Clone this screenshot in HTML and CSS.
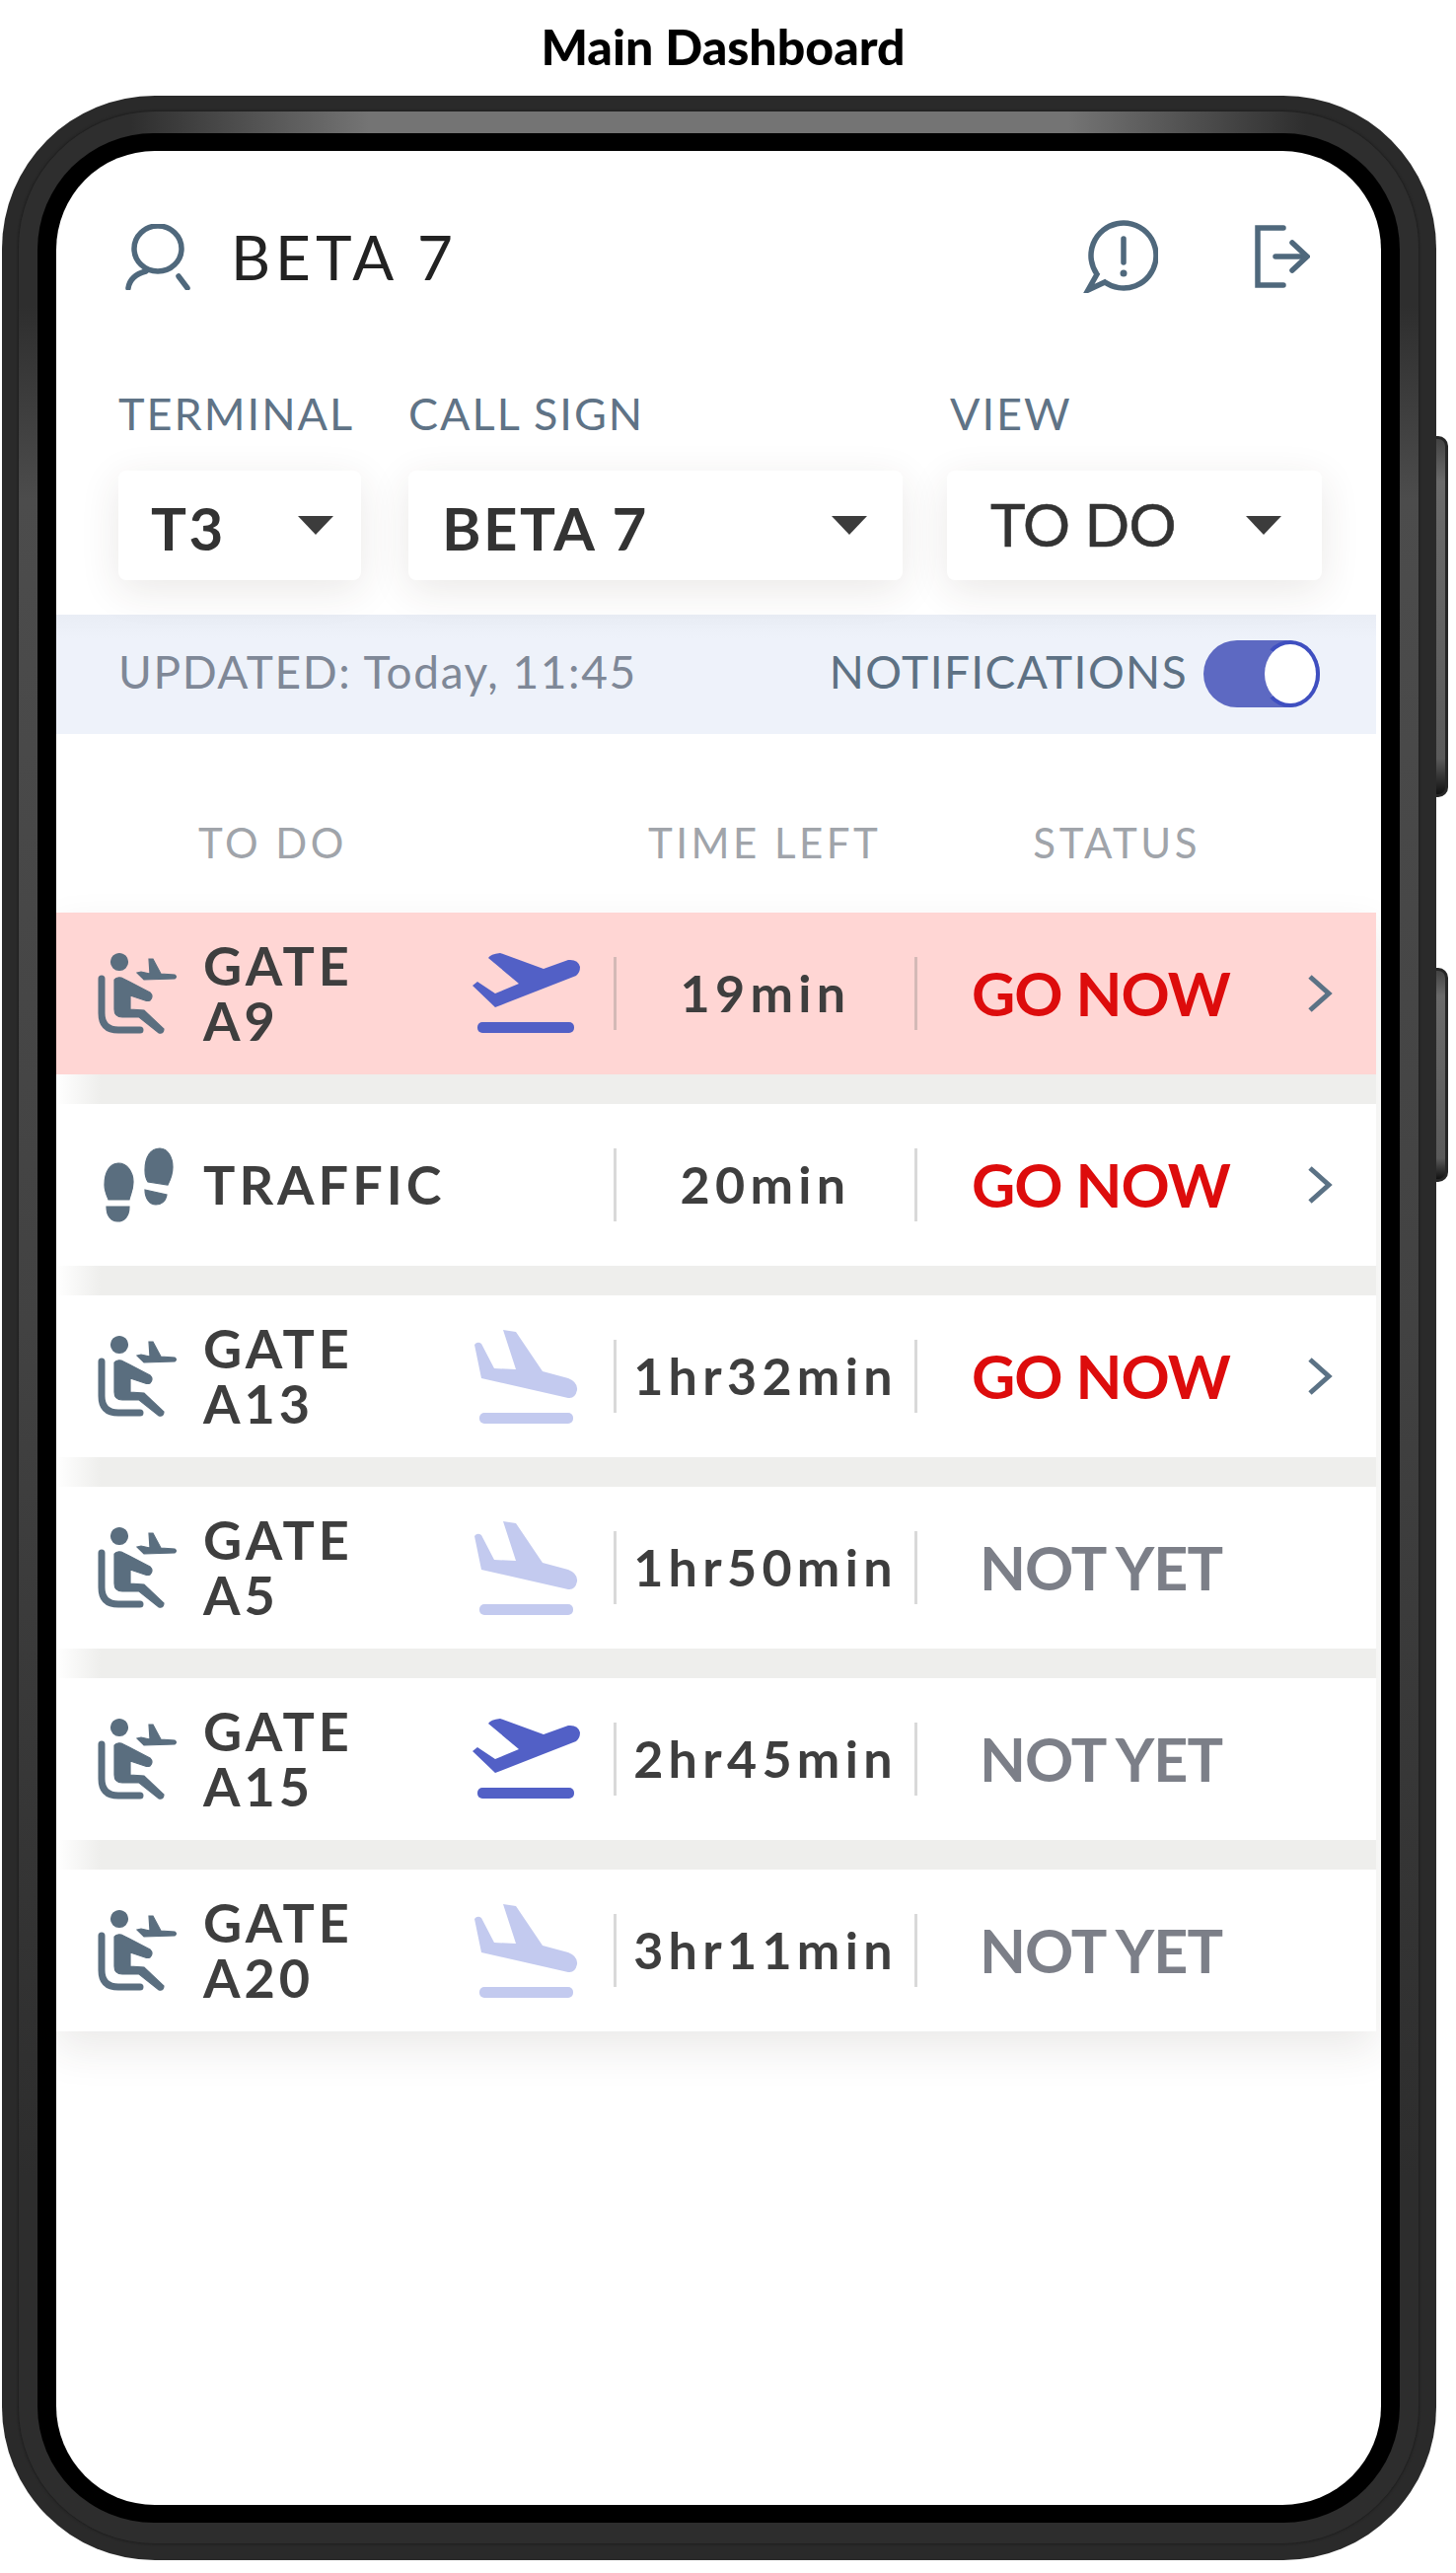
FILE: index.html
```html
<!DOCTYPE html>
<html>
<head>
  <title>Main Dashboard</title>
  <link rel="stylesheet" href="styles.css">
</head>
<body>
  <svg class="defs" width="0" height="0">
    <symbol id="seat" viewBox="0 0 100 100">
      <circle cx="31" cy="18" r="8.5"/>
      <path d="M26 36 Q28 33 33 34 L41 38 L62 49 Q66 53 62 57 Q60 58 57 57 L42 52 L42 66 L56 67 L76 86 Q76 91 71 90 L51 74 L34 74 Q26 74 26 66 Z"/>
      <path class="seat-back" d="M13 35 V70 Q13 87 30 87 H52"/>
      <path d="M49 29 L53 28 L62 30 L61 15 L65 15 L73 30 L87 31 Q90 33 87 35 L56 36 Z"/>
    </symbol>
    <symbol id="steps" viewBox="0 0 100 100">
      <path d="M16 50 C16 36 22 28 30 28 C39 28 45 37 45 47 C45 56 42 60 41 65 L20 65 C18 60 16 56 16 50 Z"/>
      <path d="M18 72 L41 72 C41 82 36 87 29 87 C23 87 18 82 18 72 Z"/>
      <path d="M57 35 C57 21 63 13 72 13 C80 13 85 22 85 32 C85 40 82 46 80 50 L60 47 C58 44 57 40 57 35 Z"/>
      <path d="M57 55 L79 60 C78 67 73 70 68 70 C62 70 57 64 57 55 Z"/>
    </symbol>
    <symbol id="takeoff" viewBox="0 0 110 82">
      <path d="M16 5 Q18 1 28 0 L72 16 L97 7 Q107 6 109 14 Q109 20 105 23 L23 55 L0 33 L5 29 L23 41 L47 31 Z"/>
      <rect x="5" y="70" width="98" height="11" rx="5"/>
    </symbol>
    <symbol id="landing" viewBox="0 0 110 100">
      <path d="M31 3 L44 5 L71 45 L97 52 Q107 56 106 64 Q104 73 97 72 L9 52 L2 18 Q5 14 9 17 L22 42 L44 43 Z"/>
      <rect x="7" y="87" width="95" height="11" rx="5"/>
    </symbol>
    <symbol id="chevron" viewBox="0 0 30 42">
      <path d="M5 4 L24 21 L5 38"/>
    </symbol>
  </svg>

  <h1 class="title">Main Dashboard</h1>

  <div class="phone">
    <div class="side-btn side-btn-top"></div>
    <div class="side-btn side-btn-low"></div>
    <div class="phone-band">
      <div class="phone-bezel">
        <div class="screen">

          <div class="top">
            <svg class="icon-user" viewBox="0 0 66 67">
              <ellipse cx="33" cy="25" rx="24" ry="23"/>
              <path d="M3 65 Q5 52 21 48"/>
              <path d="M54 53 L63 65"/>
            </svg>
            <span class="top-name">BETA 7</span>
            <svg class="icon-alert" viewBox="0 0 76 74">
              <path d="M14 55 A33 33 0 1 1 22 63 L5 71 Z"/>
              <path d="M41 19 V43"/>
              <circle class="dot" cx="41" cy="54" r="3.5"/>
            </svg>
            <svg class="icon-exit" viewBox="0 0 56 64">
              <path d="M29 3 H3 V61 H29"/>
              <path d="M21 32 H52"/>
              <path d="M38 18 L53 32 L38 46"/>
            </svg>
          </div>

          <div class="controls">
            <div class="control">
              <label>TERMINAL</label>
              <div class="select select-t"><span>T3</span><i class="caret"></i></div>
            </div>
            <div class="control">
              <label>CALL SIGN</label>
              <div class="select select-c"><span>BETA 7</span><i class="caret"></i></div>
            </div>
            <div class="control control-view">
              <label>VIEW</label>
              <div class="select select-v"><span>TO DO</span><i class="caret"></i></div>
            </div>
          </div>

          <div class="info">
            <span class="updated">UPDATED: Today, 11:45</span>
            <span class="notif">NOTIFICATIONS</span>
            <div class="toggle"><div class="knob"></div></div>
          </div>

          <div class="heads">
            <span class="head-todo">TO DO</span>
            <span class="head-time">TIME LEFT</span>
            <span class="head-status">STATUS</span>
          </div>

          <div class="rows">
            <div class="row row-alert">
              <svg class="row-icon"><use href="#seat"/></svg>
              <div class="name">GATE<br>A9</div>
              <div class="plane"><svg class="plane-up"><use href="#takeoff"/></svg></div>
              <div class="time">19min</div>
              <div class="status go">GO NOW</div>
              <svg class="chev"><use href="#chevron"/></svg>
            </div>
            <div class="row">
              <svg class="row-icon"><use href="#steps"/></svg>
              <div class="name">TRAFFIC</div>
              <div class="plane"></div>
              <div class="time">20min</div>
              <div class="status go">GO NOW</div>
              <svg class="chev"><use href="#chevron"/></svg>
            </div>
            <div class="row">
              <svg class="row-icon"><use href="#seat"/></svg>
              <div class="name">GATE<br>A13</div>
              <div class="plane"><svg class="plane-down"><use href="#landing"/></svg></div>
              <div class="time">1hr32min</div>
              <div class="status go">GO NOW</div>
              <svg class="chev"><use href="#chevron"/></svg>
            </div>
            <div class="row">
              <svg class="row-icon"><use href="#seat"/></svg>
              <div class="name">GATE<br>A5</div>
              <div class="plane"><svg class="plane-down"><use href="#landing"/></svg></div>
              <div class="time">1hr50min</div>
              <div class="status wait">NOT YET</div>
            </div>
            <div class="row">
              <svg class="row-icon"><use href="#seat"/></svg>
              <div class="name">GATE<br>A15</div>
              <div class="plane"><svg class="plane-up"><use href="#takeoff"/></svg></div>
              <div class="time">2hr45min</div>
              <div class="status wait">NOT YET</div>
            </div>
            <div class="row">
              <svg class="row-icon"><use href="#seat"/></svg>
              <div class="name">GATE<br>A20</div>
              <div class="plane"><svg class="plane-down"><use href="#landing"/></svg></div>
              <div class="time">3hr11min</div>
              <div class="status wait">NOT YET</div>
            </div>
          </div>

        </div>
      </div>
    </div>
  </div>
</body>
</html>
```

FILE: styles.css
```css
body {
  margin: 0;
  background-color: #ffffff;
  font-family: "Lato", "Liberation Sans", sans-serif;
}

.defs {
  position: absolute;
}

.title {
  width: 1466px;
  height: 97px;
  margin: 0;
  display: flex;
  align-items: center;
  justify-content: center;
  padding-bottom: 3px;
  box-sizing: border-box;
  font-size: 50px;
  font-weight: 900;
  color: #000000;
}

/* phone frame */
.phone {
  position: relative;
  width: 1454px;
  height: 2498px;
  margin-left: 2px;
  padding: 16px 18px 17px 17px;
  box-sizing: border-box;
  border-radius: 155px;
  background-color: #2a2a2a;
}

.side-btn {
  position: absolute;
  right: -12px;
  width: 9px;
  border: 3px solid #262626;
  border-left: none;
  border-radius: 0 10px 10px 0;
  background: linear-gradient(#444444, #6a6a6a 12%, #5a5a5a 90%, #111111);
}

.side-btn-top {
  top: 345px;
  height: 360px;
}

.side-btn-low {
  top: 884px;
  height: 211px;
}

.phone-band {
  height: 100%;
  padding: 22px 19px 21px 19px;
  box-sizing: border-box;
  border-radius: 138px;
  background:
    linear-gradient(90deg, #2e2e2e 8%, #747474 25%, #747474 75%, #2e2e2e 92%) top / 100% 22px no-repeat,
    linear-gradient(#2e2e2e, #2e2e2e 8%, #4c4c4c 16%, #424242 50%, #2d2d2d 85%);
  box-shadow: 0 0 3px #111111;
}

.phone-bezel {
  height: 100%;
  padding: 18px 19px;
  box-sizing: border-box;
  border-radius: 118px;
  background-color: #000000;
}

.screen {
  height: 100%;
  padding-top: 70px;
  box-sizing: border-box;
  border-radius: 100px;
  background-color: #ffffff;
  overflow: hidden;
}

/* top bar */
.top {
  display: flex;
  align-items: center;
  height: 74px;
  padding: 0 72px 0 70px;
}

.icon-user,
.icon-alert,
.icon-exit {
  fill: none;
  stroke: #4f687c;
  stroke-width: 5.5;
  stroke-linecap: round;
}

.icon-user {
  width: 66px;
  height: 67px;
}

.top-name {
  margin-left: 41px;
  font-size: 62px;
  letter-spacing: 5px;
  color: #222222;
}

.icon-alert {
  width: 76px;
  height: 74px;
  margin-left: auto;
}

.icon-alert .dot {
  fill: #4f687c;
  stroke: none;
}

.icon-exit {
  width: 56px;
  height: 64px;
  margin-left: 98px;
}

/* dropdowns */
.controls {
  display: flex;
  margin-top: 100px;
  padding-left: 63px;
}

.control label {
  display: block;
  height: 44px;
  margin-bottom: 36px;
  font-size: 45px;
  line-height: 44px;
  letter-spacing: 2px;
  color: #5f7386;
}

.control-view label {
  padding-left: 3px;
}

.select {
  display: flex;
  align-items: center;
  height: 111px;
  box-sizing: border-box;
  border-radius: 8px;
  background-color: #ffffff;
  font-size: 60px;
  color: #333333;
  box-shadow: 0 10px 40px rgba(60, 50, 40, 0.11);
}

.select-t {
  width: 246px;
  padding-left: 33px;
  margin-right: 48px;
}

.select-c {
  width: 501px;
  padding-left: 34px;
  margin-right: 45px;
}

.select-v {
  width: 380px;
  padding-left: 44px;
}

.select-t span,
.select-c span {
  margin-top: 5px;
  font-weight: 700;
  letter-spacing: 2.5px;
}

.select-v span {
  margin-top: -3px;
  letter-spacing: -0.5px;
  -webkit-text-stroke: 0.6px #333333;
}

.caret {
  width: 0;
  height: 0;
  margin-left: auto;
  margin-right: 28px;
  border-left: 18px solid transparent;
  border-right: 18px solid transparent;
  border-top: 19px solid #3c3c3c;
}

.select-c .caret {
  margin-right: 36px;
}

.select-v .caret {
  margin-right: 41px;
}

/* updated bar */
.info {
  display: flex;
  align-items: center;
  width: 1338px;
  height: 121px;
  margin-top: 35px;
  padding: 0 57px 0 63px;
  box-sizing: border-box;
  background: linear-gradient(#e9edf5, #eef2fa 20%);
  font-size: 46px;
}

.updated {
  margin-top: -6px;
  color: #7f8897;
  letter-spacing: 1.6px;
}

.notif {
  margin-top: -6px;
  margin-left: auto;
  color: #5d7184;
  letter-spacing: 1.4px;
}

.toggle {
  position: relative;
  width: 118px;
  height: 68px;
  margin-top: -2px;
  margin-left: 16px;
  border-radius: 34px;
  background-color: #5d69c2;
}

.knob {
  position: absolute;
  top: 0;
  right: 0;
  width: 60px;
  height: 68px;
  box-sizing: border-box;
  border: 4px solid #3f4fc0;
  border-left-color: #5d69c2;
  border-radius: 50%;
  background-color: #ffffff;
}

/* table */
.heads {
  display: flex;
  align-items: center;
  height: 50px;
  margin-top: 85px;
  font-size: 42px;
  letter-spacing: 3.5px;
  color: #a0a4aa;
}

.head-todo {
  margin-left: 144px;
}

.head-time {
  margin-left: 305px;
}

.head-status {
  margin-left: 154px;
}

.rows {
  display: flex;
  flex-direction: column;
  gap: 30px;
  width: 1338px;
  margin-top: 46px;
  background: linear-gradient(90deg, #ffffff, #eeeeec 45px, #eeeeec);
  box-shadow: 0 18px 40px rgba(60, 50, 40, 0.1);
}

.row {
  display: flex;
  align-items: center;
  height: 164px;
  padding-left: 33px;
  box-sizing: border-box;
  background-color: #ffffff;
  color: #3e3e3e;
}

.row-alert {
  background-color: #ffd6d4;
}

.row-icon {
  flex: none;
  width: 100px;
  height: 100px;
  margin-right: 16px;
  fill: #5a6e7f;
  stroke: #5a6e7f;
  stroke-width: 1.2;
}

.seat-back {
  fill: none;
  stroke-width: 7;
  stroke-linecap: round;
}

.name {
  flex: none;
  width: 273px;
  font-size: 54px;
  font-weight: 700;
  line-height: 56px;
  letter-spacing: 4px;
}

.plane {
  flex: none;
  display: flex;
  align-items: center;
  width: 143px;
}

.plane-up {
  width: 110px;
  height: 82px;
  fill: #5260c6;
}

.plane-down {
  width: 110px;
  height: 100px;
  fill: #c3caef;
}

.time,
.status {
  flex: none;
  height: 74px;
  display: flex;
  align-items: center;
  justify-content: center;
  box-sizing: border-box;
  border-left: 3px solid #d9d9d9;
}

.row-alert .time,
.row-alert .status {
  border-left-color: #d3b9b6;
}

.time {
  width: 305px;
  padding-bottom: 2px;
  font-size: 52px;
  font-weight: 700;
  letter-spacing: 5.3px;
}

.status {
  width: 375px;
  padding-bottom: 2px;
  font-size: 61px;
  font-weight: 700;
  letter-spacing: -1px;
}

.go {
  color: #dd0c0c;
}

.wait {
  color: #7c7f88;
}

.chev {
  flex: none;
  width: 30px;
  height: 42px;
  margin-left: 21px;
  fill: none;
  stroke: #5b7285;
  stroke-width: 5;
}
```
